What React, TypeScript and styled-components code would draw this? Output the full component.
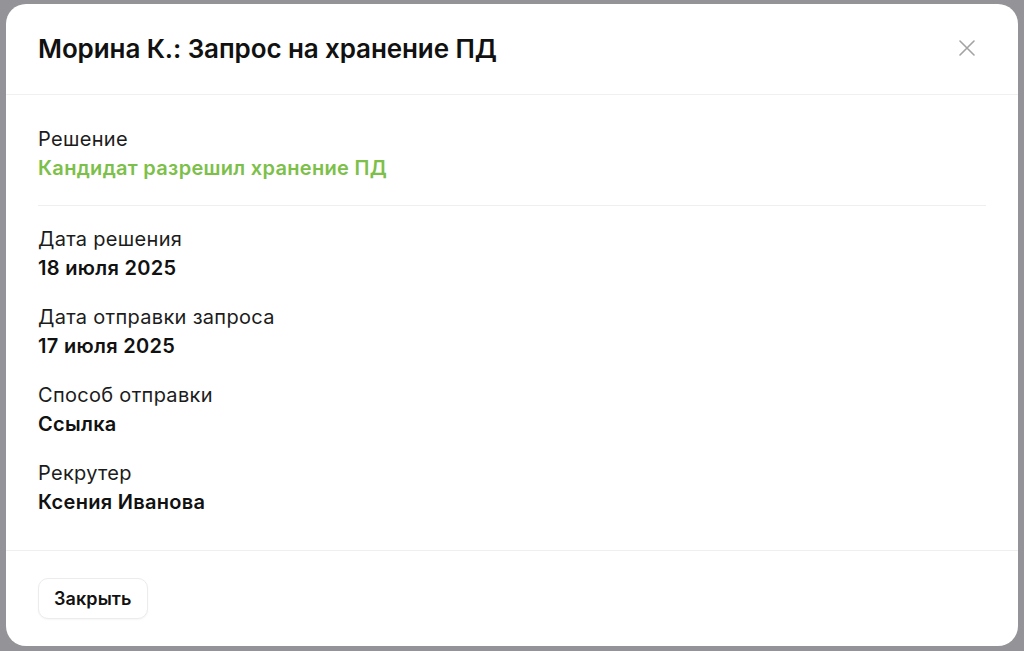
import styled, { createGlobalStyle } from "styled-components";

type Field = { label: string; value: string };

const fields: Field[] = [
  { label: "Дата решения", value: "18 июля 2025" },
  { label: "Дата отправки запроса", value: "17 июля 2025" },
  { label: "Способ отправки", value: "Ссылка" },
  { label: "Рекрутер", value: "Ксения Иванова" },
];

const CloseIcon = () => (
  <svg width="16" height="16" viewBox="0 0 16 16" fill="none">
    <path
      d="M1 1L15 15M15 1L1 15"
      stroke="#a3a3a3"
      strokeWidth="1.6"
      strokeLinecap="round"
    />
  </svg>
);

export default function App() {
  return (
    <>
      <GlobalStyle />
      <Overlay>
        <Modal role="dialog">
          <Header>
            <Title>Морина К.: Запрос на хранение ПД</Title>
            <CloseButton aria-label="Закрыть">
              <CloseIcon />
            </CloseButton>
          </Header>
          <Body>
            <Item>
              <Label>Решение</Label>
              <Value $tone="success">Кандидат разрешил хранение ПД</Value>
            </Item>
            <Divider />
            <List>
              {fields.map((f) => (
                <Item key={f.label}>
                  <Label>{f.label}</Label>
                  <Value>{f.value}</Value>
                </Item>
              ))}
            </List>
          </Body>
          <Footer>
            <Button>Закрыть</Button>
          </Footer>
        </Modal>
      </Overlay>
    </>
  );
}

const GlobalStyle = createGlobalStyle`
  * {
    box-sizing: border-box;
  }
  html, body {
    margin: 0;
    padding: 0;
    background: #949398;
    font-family: Inter, "Noto Sans", Arial, sans-serif;
    -webkit-font-smoothing: antialiased;
  }
`;

const Overlay = styled.div`
  width: 1024px;
  height: 651px;
  padding: 4px 6px 0 6px;
  background: #949398;
  overflow: hidden;
`;

const Modal = styled.div`
  width: 1012px;
  background: #ffffff;
  border-radius: 20px;
  display: flex;
  flex-direction: column;
  overflow: hidden;
`;

const Header = styled.div`
  height: 91px;
  padding: 0 43px 0 32px;
  display: flex;
  align-items: center;
  justify-content: space-between;
  border-bottom: 1px solid #f0f0f0;
`;

const Title = styled.h2`
  margin: 0 0 2px;
  font-size: 26px;
  font-weight: 600;
  letter-spacing: -0.1px;
  color: #111111;
`;

const CloseButton = styled.button`
  display: flex;
  padding: 0;
  margin-bottom: 2px;
  border: none;
  background: none;
  cursor: pointer;
`;

const Body = styled.div`
  padding: 32px 32px 35px;
`;

const Item = styled.div`
  display: flex;
  flex-direction: column;
  gap: 4px;
`;

const Label = styled.span`
  font-size: 20px;
  line-height: 24px;
  letter-spacing: 0.3px;
  color: #1c1c1c;
`;

const Value = styled.span<{ $tone?: "success" }>`
  font-size: 20px;
  line-height: 26px;
  letter-spacing: 0.3px;
  font-weight: 600;
  color: ${({ $tone }) => ($tone === "success" ? "#7cc04a" : "#111111")};
`;

const Divider = styled.hr`
  margin: 24px 0 21px;
  border: none;
  border-top: 1px solid #efefef;
`;

const List = styled.div`
  display: flex;
  flex-direction: column;
  gap: 24px;
`;

const Footer = styled.div`
  padding: 27px 32px 27px;
  border-top: 1px solid #efefef;
  display: flex;
`;

const Button = styled.button`
  height: 41px;
  padding: 0 15px;
  border: 1px solid #ececec;
  border-radius: 10px;
  background: #ffffff;
  box-shadow: 0 1px 2px rgba(0, 0, 0, 0.04);
  font-family: inherit;
  font-size: 18px;
  letter-spacing: 0.1px;
  font-weight: 600;
  color: #111111;
  cursor: pointer;
`;
